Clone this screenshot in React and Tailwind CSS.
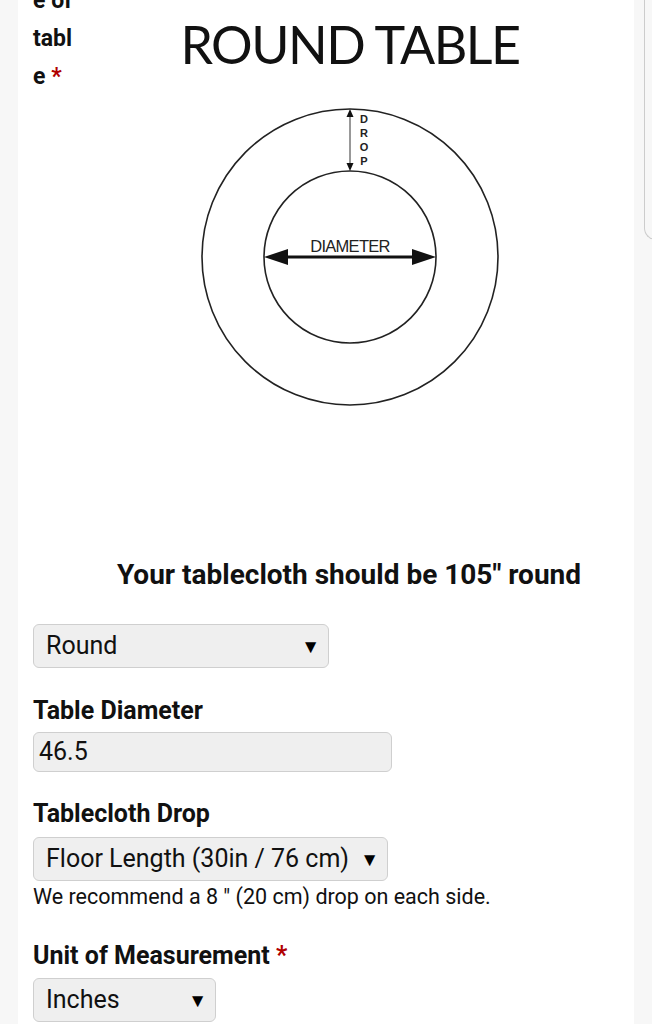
import React from 'react'

const font = { fontFamily: 'Roboto, "Liberation Sans", sans-serif' }

const Arrow = () => <span className="text-[19px] leading-none text-black">▼</span>

const SelectBox = ({ value, width }) => (
  <div className={`${width} h-[44px] flex items-center justify-between pl-[12px] pr-[8px] rounded-[6px] border border-[#cfcfcf] bg-[#efefef] text-[25px] text-[#111]`}>
    <span>{value}</span>
    <Arrow />
  </div>
)

const TableDrawing = () => (
  <svg width="340" height="320" viewBox="0 0 340 320" className="block">
    {/* circles centred at (170, 157) */}
    <circle cx="170" cy="157" r="148" fill="none" stroke="#222" strokeWidth="1.6" />
    <circle cx="170" cy="157" r="86" fill="none" stroke="#222" strokeWidth="1.6" />
    {/* diameter arrow */}
    <line x1="108" y1="157" x2="232" y2="157" stroke="#111" strokeWidth="3" />
    <path d="M84 157 L108 149 L108 165 z" fill="#111" />
    <path d="M256 157 L232 149 L232 165 z" fill="#111" />
    <text x="170" y="152" textAnchor="middle" fontFamily="Liberation Sans, Arial, sans-serif" fontSize="16.5" letterSpacing="-0.7" fill="#222">DIAMETER</text>
    {/* drop arrow */}
    <line x1="170" y1="14" x2="170" y2="66" stroke="#333" strokeWidth="1" />
    <path d="M170 9 L166.5 17 L173.5 17 z" fill="#111" />
    <path d="M170 71 L166.5 63 L173.5 63 z" fill="#111" />
    <text fontFamily="Liberation Sans, Arial, sans-serif" fontSize="11" fontWeight="bold" fill="#222" textAnchor="middle">
      <tspan x="184" y="23">D</tspan>
      <tspan x="184" y="37">R</tspan>
      <tspan x="184" y="51">O</tspan>
      <tspan x="184" y="65">P</tspan>
    </text>
  </svg>
)

export default function App() {
  return (
    <div className="relative w-[652px] h-[1024px] overflow-hidden bg-[#f7f7f7] px-[18px]" style={font}>
      <div className="bg-white h-[1100px] px-[15px] -mt-[40px]">
        {/* shape field with image */}
        <div className="flex">
          <div className="w-[147px] shrink-0 -mt-[16px] text-[23px] font-bold leading-[38px] text-[#111]">
            Shap<br />e of<br />tabl<br />e <span className="text-[#b00000]">*</span>
          </div>
          <div className="w-[340px] h-[560px] flex flex-col items-center">
            <div className="mt-[56px] whitespace-nowrap text-[52px] leading-[56px] tracking-[-1.5px] text-[#111]" style={{ fontFamily: 'Lato, "Open Sans", sans-serif' }}>
              ROUND TABLE
            </div>
            <div className="mt-[28px]">
              <TableDrawing />
            </div>
          </div>
        </div>

        <h2 className="text-center text-[28px] font-bold text-[#111] leading-[30px] pl-[46px] mt-[40px] whitespace-nowrap">
          Your tablecloth should be 105" round
        </h2>

        <div className="mt-[34px]">
          <SelectBox value="Round" width="w-[296px]" />
        </div>

        <div className="mt-[28px] text-[25px] font-bold leading-[30px] text-[#111]">Table Diameter</div>
        <div className="mt-[6px] w-[359px] h-[40px] flex items-center pl-[5px] rounded-[6px] border border-[#cfcfcf] bg-[#efefef] text-[25px] text-[#111]">
          46.5
        </div>

        <div className="mt-[27px] text-[25px] font-bold leading-[30px] text-[#111]">Tablecloth Drop</div>
        <div className="mt-[8px]">
          <SelectBox value="Floor Length (30in / 76 cm)" width="w-[355px]" />
        </div>
        <div className="mt-[3px] text-[21.5px] leading-[26px] text-[#111]">
          We recommend a 8 " (20 cm) drop on each side.
        </div>

        <div className="mt-[31px] text-[25px] font-bold leading-[30px] text-[#111]">
          Unit of Measurement <span className="text-[#b00000]">*</span>
        </div>
        <div className="mt-[7px]">
          <SelectBox value="Inches" width="w-[183px]" />
        </div>
      </div>

      {/* edge of an overlay panel at the right */}
      <div className="absolute top-[-10px] left-[644px] w-[20px] h-[250px] border-l border-b border-[#cccccc] rounded-bl-[12px]" />
    </div>
  )
}
